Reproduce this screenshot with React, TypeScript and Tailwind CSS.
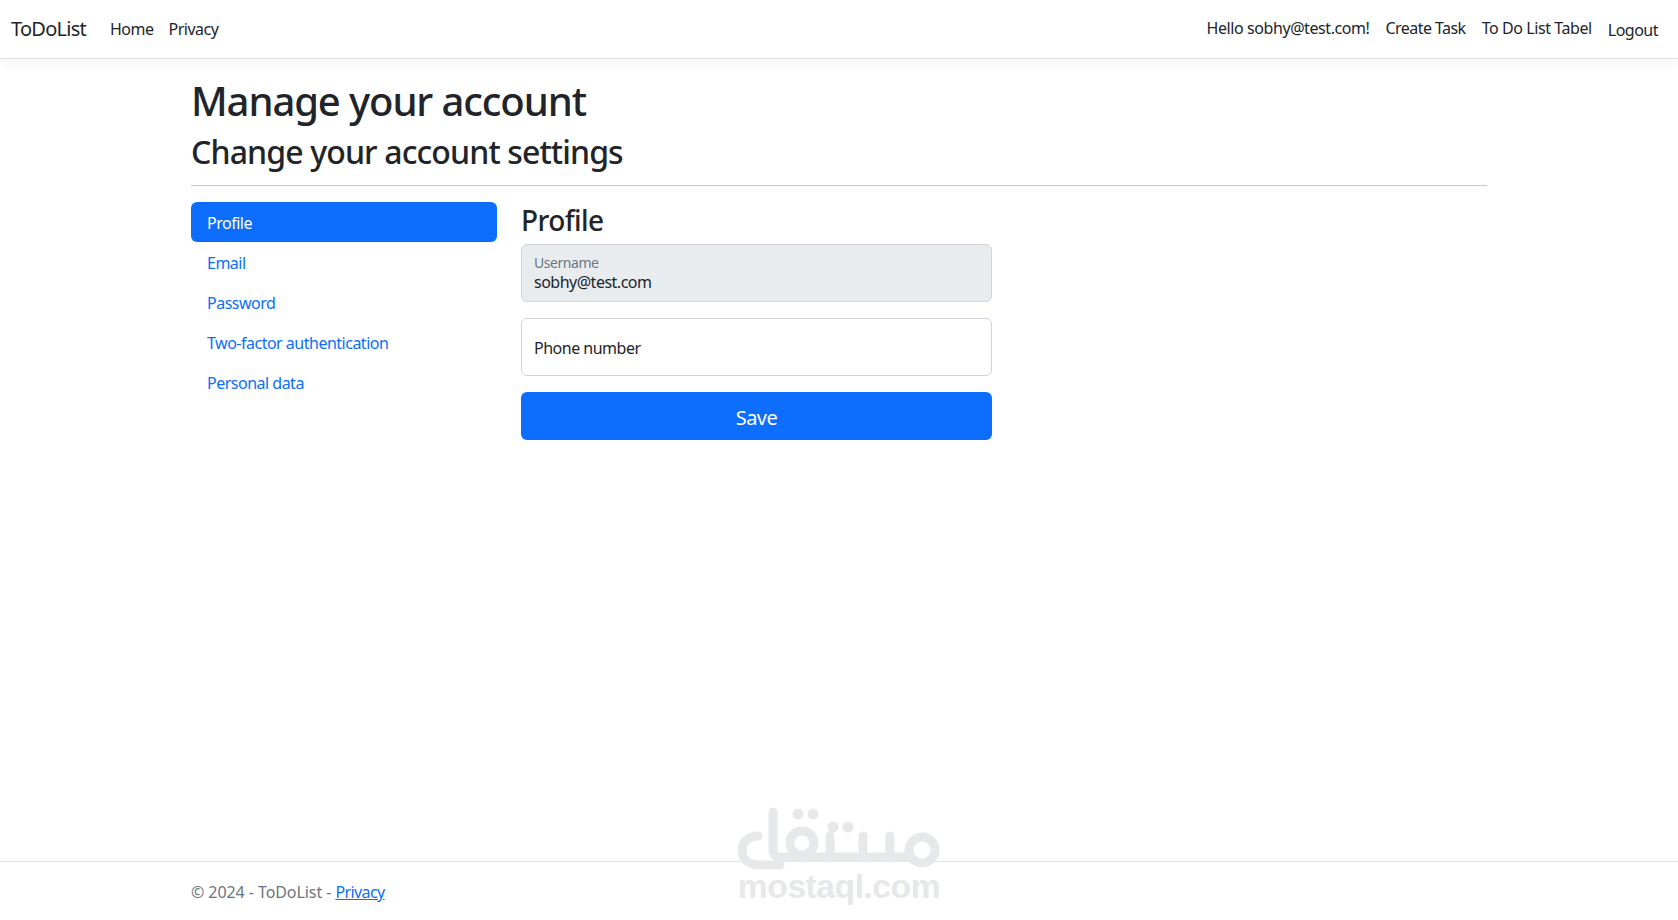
import { FC } from 'react'

const font = { fontFamily: '"Noto Sans", sans-serif' };

const sideLinks = ['Profile', 'Email', 'Password', 'Two-factor authentication', 'Personal data'];

const MostaqlMark: FC = () => (
    <div className="absolute left-[730px] top-[800px] w-[218px] pointer-events-none flex flex-col items-center">
        <svg width="218" height="75" viewBox="0 0 218 75" fill="none" stroke="#e6e8e9" strokeWidth="9" strokeLinecap="round" strokeLinejoin="round">
            <path d="M43 12V50C43 55 46 57 50 57H176" />
            <path d="M28 36C17 36 12 43 12 50C12 60 20 65 30 65H50" />
            <circle cx="72" cy="43" r="12" />
            <path d="M100 36V57M133 36V57M160 36V57" />
            <circle cx="192" cy="50" r="13" />
            <g fill="#e6e8e9" stroke="none">
                <circle cx="68" cy="14" r="5.5" />
                <circle cx="83" cy="14" r="5.5" />
                <circle cx="103" cy="27" r="5.5" />
                <circle cx="118" cy="27" r="5.5" />
            </g>
        </svg>
        <span className="-mt-[8px] text-[33.7px] leading-[38px] font-bold text-[#e6e8e9]" style={{ fontFamily: '"Liberation Sans", sans-serif' }}>mostaql.com</span>
    </div>
)

const App: FC = () => {
    return (
        <div className="relative min-h-screen flex flex-col bg-white text-[#212529] text-[16px] tracking-[-0.5px]" style={font}>
            <nav className="h-[59px] flex items-center justify-between pl-3 pr-5 border-b border-[#dee2e6] shadow-[0_4px_12px_rgba(0,0,26,0.05)] mb-4">
                <div className="flex items-center">
                    <a className="text-[20px] leading-[30px] mr-6 -ml-px tracking-[-0.75px]">ToDoList</a>
                    <a className="leading-6 pr-[15px]">Home</a>
                    <a className="leading-6">Privacy</a>
                </div>
                <div className="flex items-center gap-4">
                    <a className="leading-6 -mt-[2px] tracking-[-0.42px]">Hello sobhy@test.com!</a>
                    <a className="leading-6 -mt-[2px] tracking-[-0.55px]">Create Task</a>
                    <a className="leading-6 -mt-[2px] tracking-[-0.42px]">To Do List Tabel</a>
                    <button className="leading-6 mt-px">Logout</button>
                </div>
            </nav>

            <main className="w-[1296px] mx-auto">
                <h1 className="text-[40px] leading-[52px] font-medium mb-1 tracking-[-1.1px]">Manage your account</h1>
                <h2 className="text-[32px] leading-[42px] font-medium tracking-[-0.87px]">Change your account settings</h2>
                <hr className="mt-3 mb-4 border-t border-[#c6c7c8]" />
                <div className="flex">
                    <ul className="w-[306px] mr-6 flex flex-col">
                        {sideLinks.map((l, i) => (
                            <li key={l} className={i === 0 ? 'h-10 px-4 pt-px flex items-center rounded-[6px] bg-[#0d6efd] text-white' : 'h-10 px-4 pt-px flex items-center text-[#0d6efd]'}>
                                {l}
                            </li>
                        ))}
                    </ul>
                    <div className="w-[471px]">
                        <h3 className="text-[28px] leading-[36px] font-medium tracking-[-0.6px] mb-1.5">Profile</h3>
                        <div className="h-[58px] mb-4 px-3 rounded-[6px] border border-[#ced4da] bg-[#e9ecef] flex flex-col justify-center">
                            <span className="text-[14px] leading-[18px] text-[#6c757d] tracking-[-0.45px]">Username</span>
                            <span className="leading-[21px]">sobhy@test.com</span>
                        </div>
                        <div className="h-[58px] mb-4 px-3 pt-px rounded-[6px] border border-[#ced4da] bg-white flex items-center">
                            Phone number
                        </div>
                        <button className="w-full h-12 pt-[3px] rounded-[6px] bg-[#0d6efd] text-white text-[20px] leading-[30px]">Save</button>
                    </div>
                </div>
            </main>

            <footer className="mt-auto h-[59px] border-t border-[#dee2e6] text-[#6c757d] tracking-[-0.07px]">
                <div className="w-[1296px] mx-auto leading-[60px]">
                    © 2024 - ToDoList - <a className="text-[#0d6efd] underline tracking-[-0.6px]">Privacy</a>
                </div>
            </footer>

            <MostaqlMark />
        </div>
    )
}

export default App;
